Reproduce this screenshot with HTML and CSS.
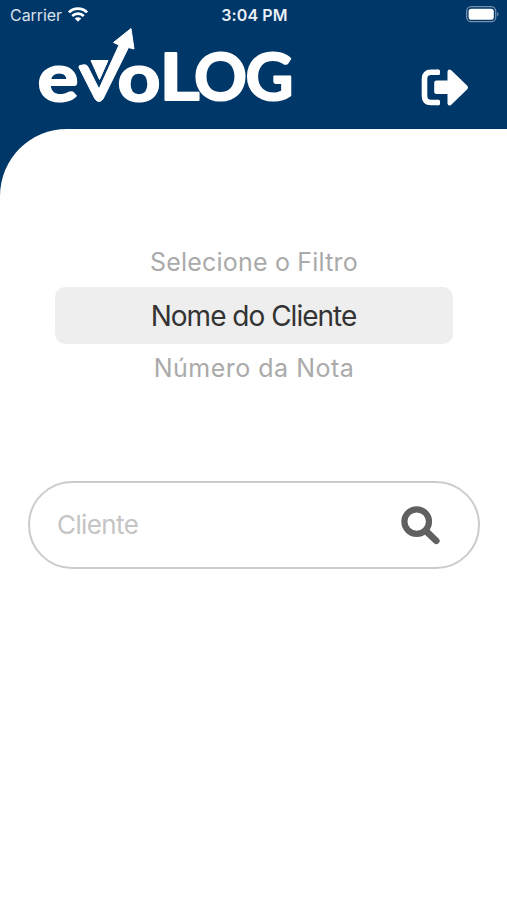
FILE: index.html
```
<!DOCTYPE html>
<html lang="pt-BR">
<head>
<meta charset="utf-8">
<title>evoLOG</title>
<meta name="viewport" content="width=device-width, initial-scale=1">
<link rel="stylesheet" href="styles.css">
</head>
<body>
<div class="app">
  <header class="header">
    <div class="status">
      <div class="status-left">
        <span class="carrier">Carrier</span>
        <svg class="wifi" viewBox="0 0 20 15" width="20" height="15">
          <g fill="none" stroke="#fff" stroke-width="2.700">
            <path d="M.9 5.400C6 .4 14 .4 19.100 5.400"/>
            <path d="M4.200 8.900C7.500 5.900 12.500 5.900 15.800 8.900"/>
          </g>
          <path d="M6.700 11.400C8.600 9.800 11.400 9.800 13.300 11.400L10 14.700Z" fill="#fff"/>
        </svg>
      </div>
      <span class="clock">3:04 PM</span>
      <div class="status-right">
        <svg width="33" height="17" viewBox="0 0 33 17">
          <rect x=".7" y=".7" width="29" height="15" rx="4.500" fill="none" stroke="#7890ad" stroke-width="1.300"/>
          <rect x="2.600" y="2.700" width="25.200" height="11" rx="2.800" fill="#fff"/>
          <path d="M31.200 6Q34 8.200 31.200 10.500Z" fill="#7890ad"/>
        </svg>
      </div>
    </div>
    <div class="brand">
      <svg class="logo" width="260" height="90" viewBox="36 26 260 90" role="img" aria-label="evoLOG">
        <g class="wordmark">
          <text class="small" x="37.500" y="100.500" textLength="41" lengthAdjust="spacingAndGlyphs">e</text>
          <text class="small" x="117.500" y="100.500" textLength="43" lengthAdjust="spacingAndGlyphs">o</text>
          <text x="159.500" y="99.500" textLength="40" lengthAdjust="spacingAndGlyphs">L</text>
          <text x="194" y="99.500" textLength="53" lengthAdjust="spacingAndGlyphs">O</text>
          <text x="245.500" y="99.500" textLength="48" lengthAdjust="spacingAndGlyphs">G</text>
        </g>
        <path class="mark" d="M79 67.500Q78.500 66 80 65.500L84 64.800Q87 64.500 88 67L99 89L119 45L113.500 42.500L131 28.500L134 49L128.500 47.500L103 99Q99 104 95 99Z"/>
        <path class="mark" d="M91 60.500H108L99.500 79.500Z"/>
      </svg>
      <svg class="exit" width="48" height="37" viewBox="0 0 48 37">
        <path d="M17 3.300H10Q3.500 3.300 3.500 9.800V27Q3.500 33.500 10 33.500H17" fill="none" stroke="#fff" stroke-width="5.600" stroke-linejoin="round"/>
        <path d="M16 .5H17.500Q19 .5 19 2V4.600Q19 6.100 17.500 6.100H16ZM16 30.700H17.500Q19 30.700 19 32.200V34.800Q19 36.300 17.500 36.300H16Z" fill="#fff"/>
        <path d="M15.500 11.500H26.500V2.500Q27 -.5 30 1L46 16.500Q48 18.500 46 20.500L30 36Q27 37.500 26.500 34.500V25H15.500Q13.200 25 13.200 23V13.500Q13.200 11.500 15.500 11.500Z" fill="#fff"/>
      </svg>
    </div>
  </header>
  <main class="sheet">
    <div class="picker">
      <div class="option"><span class="label-top">Selecione o Filtro</span></div>
      <div class="option selected"><span class="label-selected">Nome do Cliente</span></div>
      <div class="option"><span class="label-bottom">Número da Nota</span></div>
    </div>
    <div class="search">
      <span class="placeholder">Cliente</span>
      <svg width="39" height="39" viewBox="0 0 39 39">
        <path d="M25 25L35.300 34.800" stroke="#606060" stroke-width="6.600" stroke-linecap="round"/>
        <circle cx="15.700" cy="15.600" r="12.300" fill="none" stroke="#606060" stroke-width="6.200"/>
      </svg>
    </div>
  </main>
</div>
</body>
</html>
```
FILE: styles.css
```
* { box-sizing: border-box; }
body {
  margin: 0;
  background: #fff;
  font-family: Inter, "Liberation Sans", sans-serif;
}
svg { display: block; flex: none; overflow: visible; }
.app {
  height: 900px;
  background: linear-gradient(#003769 0 210px, #fff 210px);
  overflow: hidden;
}
.header { height: 129px; }
.status {
  height: 30px;
  display: grid;
  grid-template-columns: 1fr auto 1fr;
  align-items: center;
  padding: 0 8px 0 10px;
  color: #fff;
}
.status-left { display: flex; align-items: center; gap: 6px; }
.status-right { display: flex; justify-content: flex-end; padding-bottom: 2px; }
.wifi { margin-top: -2px; }
.carrier { font-size: 16px; color: #d9e2ec; letter-spacing: -.05px; }
.clock { font-size: 16px; font-weight: 600; letter-spacing: .1px; color: #eaf0f6; }
.brand {
  display: flex;
  justify-content: space-between;
  align-items: flex-start;
  padding: 0 38px 0 36px;
  margin-top: -4px;
}
.exit { margin-top: 43px; }
.wordmark {
  font-family: Lato, sans-serif;
  font-size: 65px;
  font-weight: 700;
  fill: #fff;
  stroke: #fff;
  stroke-width: 2px;
  stroke-linejoin: round;
}
.wordmark .small { font-size: 67px; }
.mark { fill: #fff; stroke: #fff; stroke-width: 1px; stroke-linejoin: round; }
.sheet {
  height: 771px;
  background: #fff;
  border-top-left-radius: 67px;
  padding: 109px 27px 0 28px;
}
.picker { margin: 0 27px; }
.option {
  height: 49px;
  display: flex;
  align-items: center;
  justify-content: center;
  color: #aaa;
  font-size: 25px;
  white-space: nowrap;
}
.selected {
  height: 57px;
  border-radius: 10px;
  background: #eee;
  color: #333;
  font-size: 28px;
}
.label-top { letter-spacing: .2px; margin-top: -1px; }
.label-selected { letter-spacing: -1px; margin-left: -1px; }
.label-bottom { letter-spacing: .5px; margin-top: -2px; }
.search {
  height: 88px;
  margin-top: 88px;
  border: 2px solid #ccc;
  border-radius: 44px;
  display: flex;
  align-items: center;
  justify-content: space-between;
  padding: 0 38px 0 27px;
}
.placeholder { font-size: 26px; letter-spacing: -.6px; color: #c4c4c4; margin-top: -2px; }
```
